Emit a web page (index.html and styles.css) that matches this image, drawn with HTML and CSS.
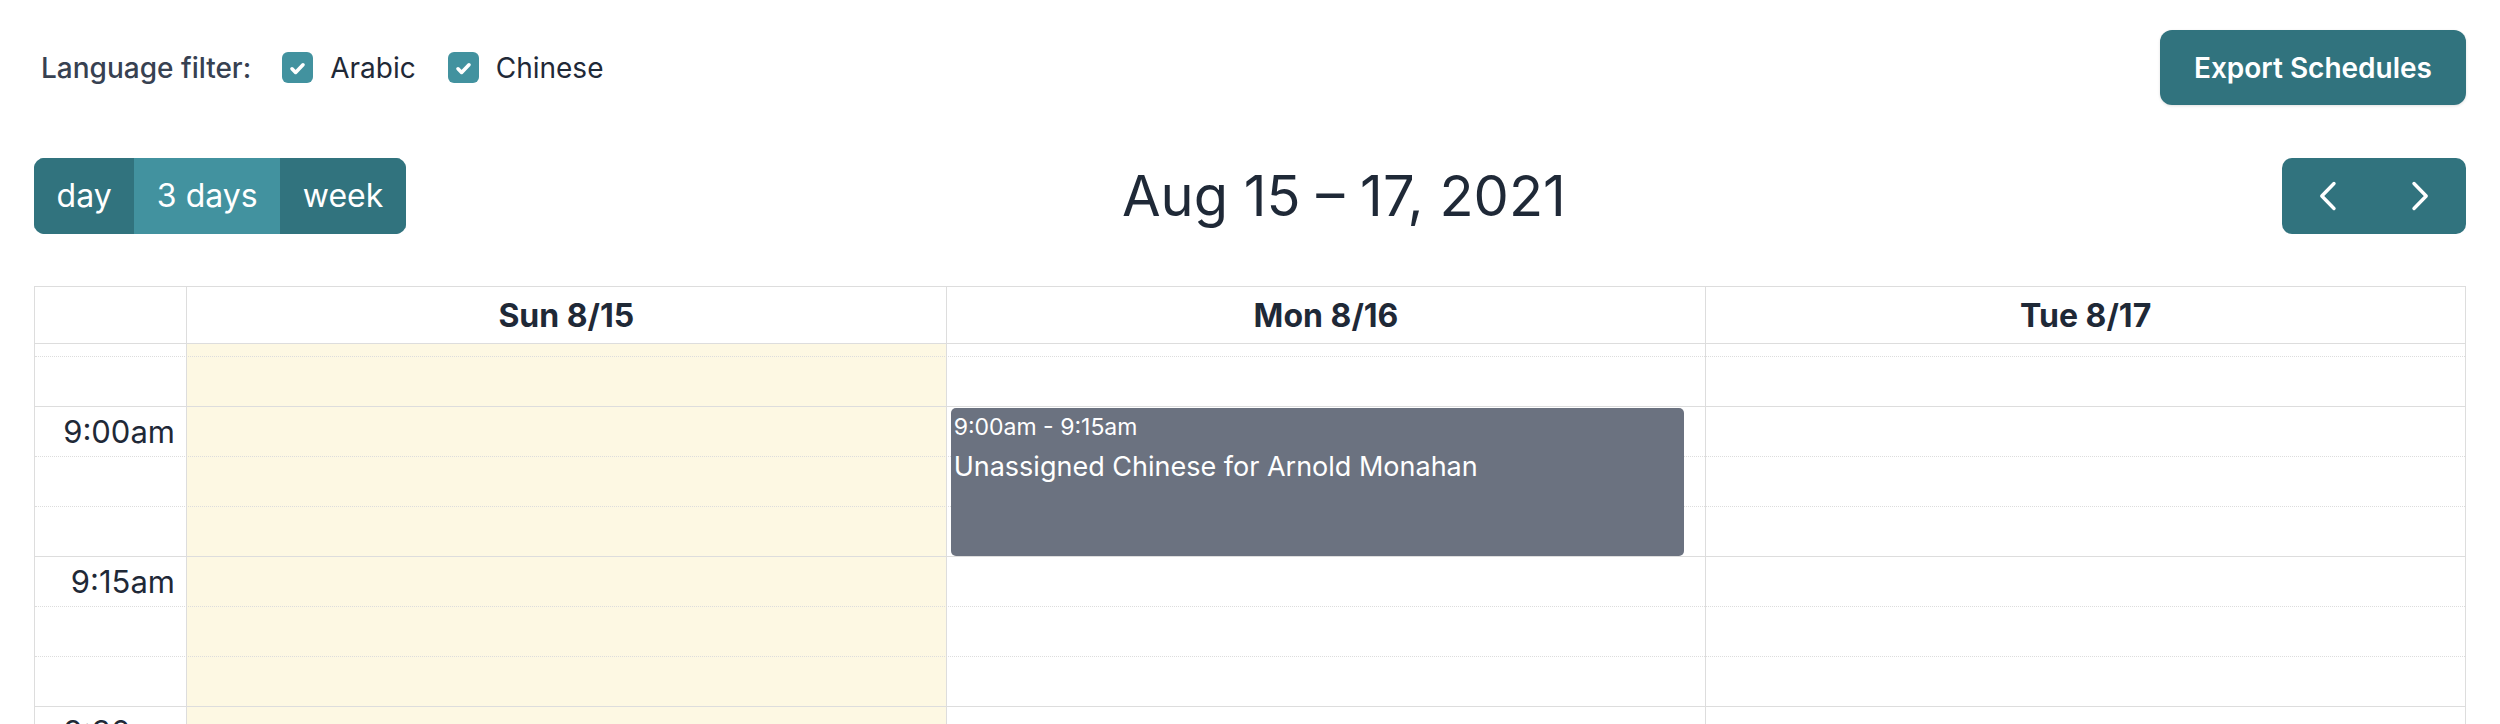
FILE: index.html
```html
<!DOCTYPE html>
<html lang="en">
<head>
<meta charset="utf-8">
<title>Schedules</title>
<link rel="stylesheet" href="styles.css">
</head>
<body>
<div class="page">
  <div class="topbar">
    <div class="filter">
      <span class="filter-label">Language filter:</span>
      <label class="check">
        <span class="box"><svg viewBox="0 0 31 31" width="31" height="31"><path d="M10 16.8l3.6 3.6 7.4-7.6" fill="none" stroke="#fff" stroke-width="3.6" stroke-linecap="round" stroke-linejoin="round"/></svg></span>
        <span class="check-text">Arabic</span>
      </label>
      <label class="check">
        <span class="box"><svg viewBox="0 0 31 31" width="31" height="31"><path d="M10 16.8l3.6 3.6 7.4-7.6" fill="none" stroke="#fff" stroke-width="3.6" stroke-linecap="round" stroke-linejoin="round"/></svg></span>
        <span class="check-text">Chinese</span>
      </label>
    </div>
    <button class="export">Export Schedules</button>
  </div>

  <div class="toolbar">
    <div class="views">
      <button class="vbtn">day</button>
      <button class="vbtn active">3 days</button>
      <button class="vbtn">week</button>
    </div>
    <h2 class="title">Aug 15 – 17, 2021</h2>
    <div class="nav">
      <button class="nbtn" aria-label="prev"><svg viewBox="0 0 20 32" width="20" height="32"><path d="M16 3.5L3.8 16 16 28.5" fill="none" stroke="#fff" stroke-width="3.4" stroke-linecap="round" stroke-linejoin="round"/></svg></button>
      <button class="nbtn" aria-label="next"><svg viewBox="0 0 20 32" width="20" height="32"><path d="M4 3.5L16.2 16 4 28.5" fill="none" stroke="#fff" stroke-width="3.4" stroke-linecap="round" stroke-linejoin="round"/></svg></button>
    </div>
  </div>

  <div class="cal">
    <div class="head">
      <div class="hcell axis"></div>
      <div class="hcell">Sun 8/15</div>
      <div class="hcell">Mon 8/16</div>
      <div class="hcell">Tue 8/17</div>
    </div>
    <div class="body">
      <div class="cols">
        <div class="col axis"></div>
        <div class="col today"></div>
        <div class="col"></div>
        <div class="col"></div>
      </div>
      <div class="slats">
        <div class="slat partial"><div class="lbl"></div></div>
        <div class="slat minor"><div class="lbl"></div></div>
        <div class="slat major"><div class="lbl">9:00am</div></div>
        <div class="slat minor"><div class="lbl"></div></div>
        <div class="slat minor"><div class="lbl"></div></div>
        <div class="slat major"><div class="lbl">9:15am</div></div>
        <div class="slat minor"><div class="lbl"></div></div>
        <div class="slat minor"><div class="lbl"></div></div>
        <div class="slat major"><div class="lbl">9:30am</div></div>
        <div class="slat minor"><div class="lbl"></div></div>
      </div>
      <div class="events">
        <div class="ecol axis"></div>
        <div class="ecol"></div>
        <div class="ecol">
          <div class="event">
            <div class="event-time">9:00am - 9:15am</div>
            <div class="event-title">Unassigned Chinese for Arnold Monahan</div>
          </div>
        </div>
        <div class="ecol"></div>
      </div>
    </div>
  </div>
</div>
</body>
</html>
```

FILE: styles.css
```css
* { box-sizing: border-box; }

html, body {
  margin: 0;
  padding: 0;
  background: #fff;
}

body {
  font-family: Inter, "Noto Sans", "Liberation Sans", sans-serif;
  color: #1f2937;
  height: 724px;
  overflow: hidden;
}

.page {
  padding: 30px 34px 0 34px;
}

/* top bar */
.topbar {
  display: flex;
  justify-content: space-between;
  align-items: center;
}

.filter {
  display: flex;
  align-items: center;
  padding-left: 7px;
}

.filter-label {
  font-size: 28px;
  font-weight: 500;
  color: #374151;
  margin-right: 31px;
}

.check {
  display: flex;
  align-items: center;
  margin-right: 32px;
}

.box {
  width: 31px;
  height: 31px;
  border-radius: 6px;
  background: #42929f;
  display: flex;
  align-items: center;
  justify-content: center;
  margin-right: 17px;
}

.box svg { display: block; }

.check-text {
  font-size: 28px;
  color: #1f2937;
}

.export {
  font-family: inherit;
  font-size: 28px;
  font-weight: 600;
  color: #fff;
  background: #31737e;
  border: none;
  border-radius: 12px;
  height: 75px;
  padding: 0 34px;
  box-shadow: 0 1px 3px rgba(0,0,0,0.12);
}

/* calendar toolbar */
.toolbar {
  display: flex;
  justify-content: space-between;
  align-items: center;
  margin-top: 53px;
  margin-bottom: 52px;
}

.views, .nav {
  display: flex;
  border-radius: 10px;
  overflow: hidden;
}

.vbtn {
  font-family: inherit;
  font-size: 32px;
  line-height: 1.5;
  color: #fff;
  background: #31737e;
  border: 1px solid #31737e;
  padding: 12px 21.6px;
  height: 76px;
}

.vbtn.active {
  background: #42929f;
  border-color: #42929f;
}

.nbtn {
  background: #31737e;
  border: none;
  width: 92px;
  height: 76px;
  display: flex;
  align-items: center;
  justify-content: center;
  padding: 0;
}

.title {
  margin: 0;
  font-size: 56px;
  font-weight: 400;
  color: #1f2937;
}

/* calendar grid */
.cal {
  border: 1px solid #ddd;
  border-bottom: none;
}

.head {
  display: grid;
  grid-template-columns: 151px repeat(3, 1fr);
  border-bottom: 1px solid #ddd;
}

.hcell {
  height: 56px;
  display: flex;
  align-items: center;
  justify-content: center;
  font-size: 32px;
  font-weight: 700;
  color: #1f2937;
  border-left: 1px solid #ddd;
}

.hcell.axis { border-left: none; }

.body {
  display: grid;
  height: 420px;
  overflow: hidden;
}

.cols, .slats, .events {
  grid-area: 1 / 1;
}

.cols, .events {
  display: grid;
  grid-template-columns: 151px repeat(3, 1fr);
}

.col {
  border-left: 1px solid #ddd;
}

.col.axis { border-left: none; }

.col.today {
  background: #fdf8e3;
}

.slat {
  height: 50px;
  border-top: 1px dotted #ddd;
  display: grid;
  grid-template-columns: 151px 1fr;
}

.slat.partial {
  height: 12px;
  border-top: none;
}

.slat.major {
  border-top: 1px solid #ddd;
}

.lbl {
  font-size: 31px;
  color: #1f2937;
  text-align: right;
  padding-right: 11px;
  line-height: 49px;
}

.ecol {
  border-left: 1px solid transparent;
}

.ecol.axis { border-left: none; }

.event {
  margin: 64px 21px 0 4px;
  height: 148px;
  background: #6b7280;
  border-radius: 5px;
  color: #fff;
  padding: 1px 3px;
}

.event-time {
  font-size: 23px;
  line-height: 36px;
}

.event-title {
  font-size: 27px;
  line-height: 40px;
  margin-top: 2px;
}
```
